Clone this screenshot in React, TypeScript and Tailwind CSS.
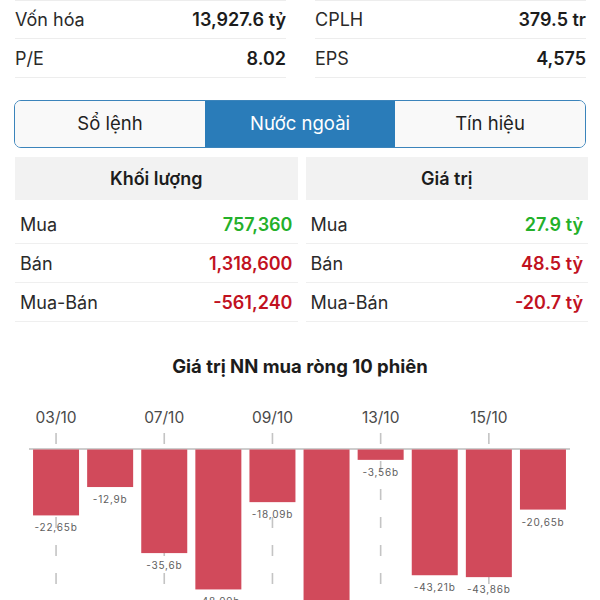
import React from 'react';

const FONT = 'font-[Inter,"Noto_Sans",sans-serif]';

const stats = [
  { label: 'Vốn hóa', value: '13,927.6 tỷ' },
  { label: 'CPLH', value: '379.5 tr' },
  { label: 'P/E', value: '8.02' },
  { label: 'EPS', value: '4,575' },
];

const tabs = ['Sổ lệnh', 'Nước ngoài', 'Tín hiệu'];
const ACTIVE_TAB = 1;

type Cell = { label: string; value: string; tone: 'up' | 'down' };

const volume: Cell[] = [
  { label: 'Mua', value: '757,360', tone: 'up' },
  { label: 'Bán', value: '1,318,600', tone: 'down' },
  { label: 'Mua-Bán', value: '-561,240', tone: 'down' },
];

const amount: Cell[] = [
  { label: 'Mua', value: '27.9 tỷ', tone: 'up' },
  { label: 'Bán', value: '48.5 tỷ', tone: 'down' },
  { label: 'Mua-Bán', value: '-20.7 tỷ', tone: 'down' },
];

// net foreign value per session, in billions
const sessions = [
  { date: '03/10', value: -22.65 },
  { date: '06/10', value: -12.9 },
  { date: '07/10', value: -35.6 },
  { date: '08/10', value: -48.09 },
  { date: '09/10', value: -18.09 },
  { date: '10/10', value: -56.4 },
  { date: '13/10', value: -3.56 },
  { date: '14/10', value: -43.21 },
  { date: '15/10', value: -43.86 },
  { date: '16/10', value: -20.65 },
];

const fmt = (v: number) => `${v.toString().replace('.', ',')}b`;

function DataColumn({ title, rows }: { title: string; rows: Cell[] }) {
  return (
    <div className="flex flex-col">
      <div className="h-[43px] bg-[#f2f2f2] flex items-center justify-center text-[18px] font-semibold text-[#1c1c1c]">
        {title}
      </div>
      <div className="pt-[5px]">
        {rows.map((r) => (
          <div
            key={r.label}
            className="h-[39px] flex items-center justify-between px-[5px] border-b border-[#efefef] text-[18px]"
          >
            <span className="text-[#2a2a2a]">{r.label}</span>
            <span
              className={`font-semibold ${
                r.tone === 'up' ? 'text-[#24b02a]' : 'text-[#c1121f]'
              }`}
            >
              {r.value}
            </span>
          </div>
        ))}
      </div>
    </div>
  );
}

function NetChart() {
  const left = 29;
  const slot = 54.1;
  const base = 68;
  const scale = 2.91;

  return (
    <svg width={600} height={220} className="block mt-[3px]">
      {/* dashed ticks under labelled dates */}
      {sessions.map((s, i) =>
        i % 2 === 0 ? (
          <line
            key={`t${i}`}
            x1={left + slot * (i + 0.5)}
            x2={left + slot * (i + 0.5)}
            y1={52}
            y2={220}
            stroke="#c4c4c4"
            strokeWidth={1.6}
            strokeDasharray="11 17"
          />
        ) : null,
      )}
      {sessions.map((s, i) =>
        i % 2 === 0 ? (
          <text
            key={`d${i}`}
            x={left + slot * (i + 0.5)}
            y={42}
            textAnchor="middle"
            fontSize={15.5}
            fill="#4a4a4a"
            fontFamily="Inter, sans-serif"
          >
            {s.date}
          </text>
        ) : null,
      )}
      <line x1={left} x2={570} y1={base} y2={base} stroke="#9a9a9a" strokeWidth={1} />
      {sessions.map((s, i) => {
        const h = Math.abs(s.value) * scale;
        const cx = left + slot * (i + 0.5);
        return (
          <g key={`b${i}`}>
            <rect x={cx - 23} y={base + 0.5} width={46} height={h} fill="#d14a5b" />
            <text
              x={cx}
              y={base + h + 16.5}
              textAnchor="middle"
              fontSize={10}
              letterSpacing={0.8}
              fill="#5e5e5e"
              fontFamily="Inter, sans-serif"
            >
              {fmt(s.value)}
            </text>
          </g>
        );
      })}
    </svg>
  );
}

export default function App() {
  return (
    <div className={`w-[600px] h-[600px] overflow-hidden bg-white ${FONT}`}>
      {/* key stats */}
      <div className="grid grid-cols-2 gap-x-[29px] pl-[15px] pr-[14px]">
        {stats.map((s, i) => (
          <div
            key={s.label}
            className={`h-[39px] flex items-center justify-between border-b border-[#ededed] text-[18px] ${
              i < 2 ? 'border-t' : ''
            }`}
          >
            <span className="text-[#2a2a2a]">{s.label}</span>
            <span className="font-semibold text-[#1c1c1c]">{s.value}</span>
          </div>
        ))}
      </div>

      {/* tabs */}
      <div className="mt-[22px] mx-[14px] h-[48px] flex border border-[#3b84bb] rounded-[7px] overflow-hidden">
        {tabs.map((t, i) => (
          <div
            key={t}
            className={`flex-1 flex items-center justify-center text-[18.5px] ${
              i === ACTIVE_TAB ? 'bg-[#2a7cb9] text-white' : 'bg-[#f9f9f9] text-[#1f1f1f]'
            }`}
          >
            {t}
          </div>
        ))}
      </div>

      {/* foreign trading table */}
      <div className="mt-[9px] grid grid-cols-2 gap-x-[8px] pl-[15px] pr-[12px]">
        <DataColumn title="Khối lượng" rows={volume} />
        <DataColumn title="Giá trị" rows={amount} />
      </div>

      {/* chart */}
      <div className="mt-[34px] h-[22px] flex items-center justify-center text-[18.5px] font-bold text-[#1c1c1c]">
        Giá trị NN mua ròng 10 phiên
      </div>
      <NetChart />
    </div>
  );
}
